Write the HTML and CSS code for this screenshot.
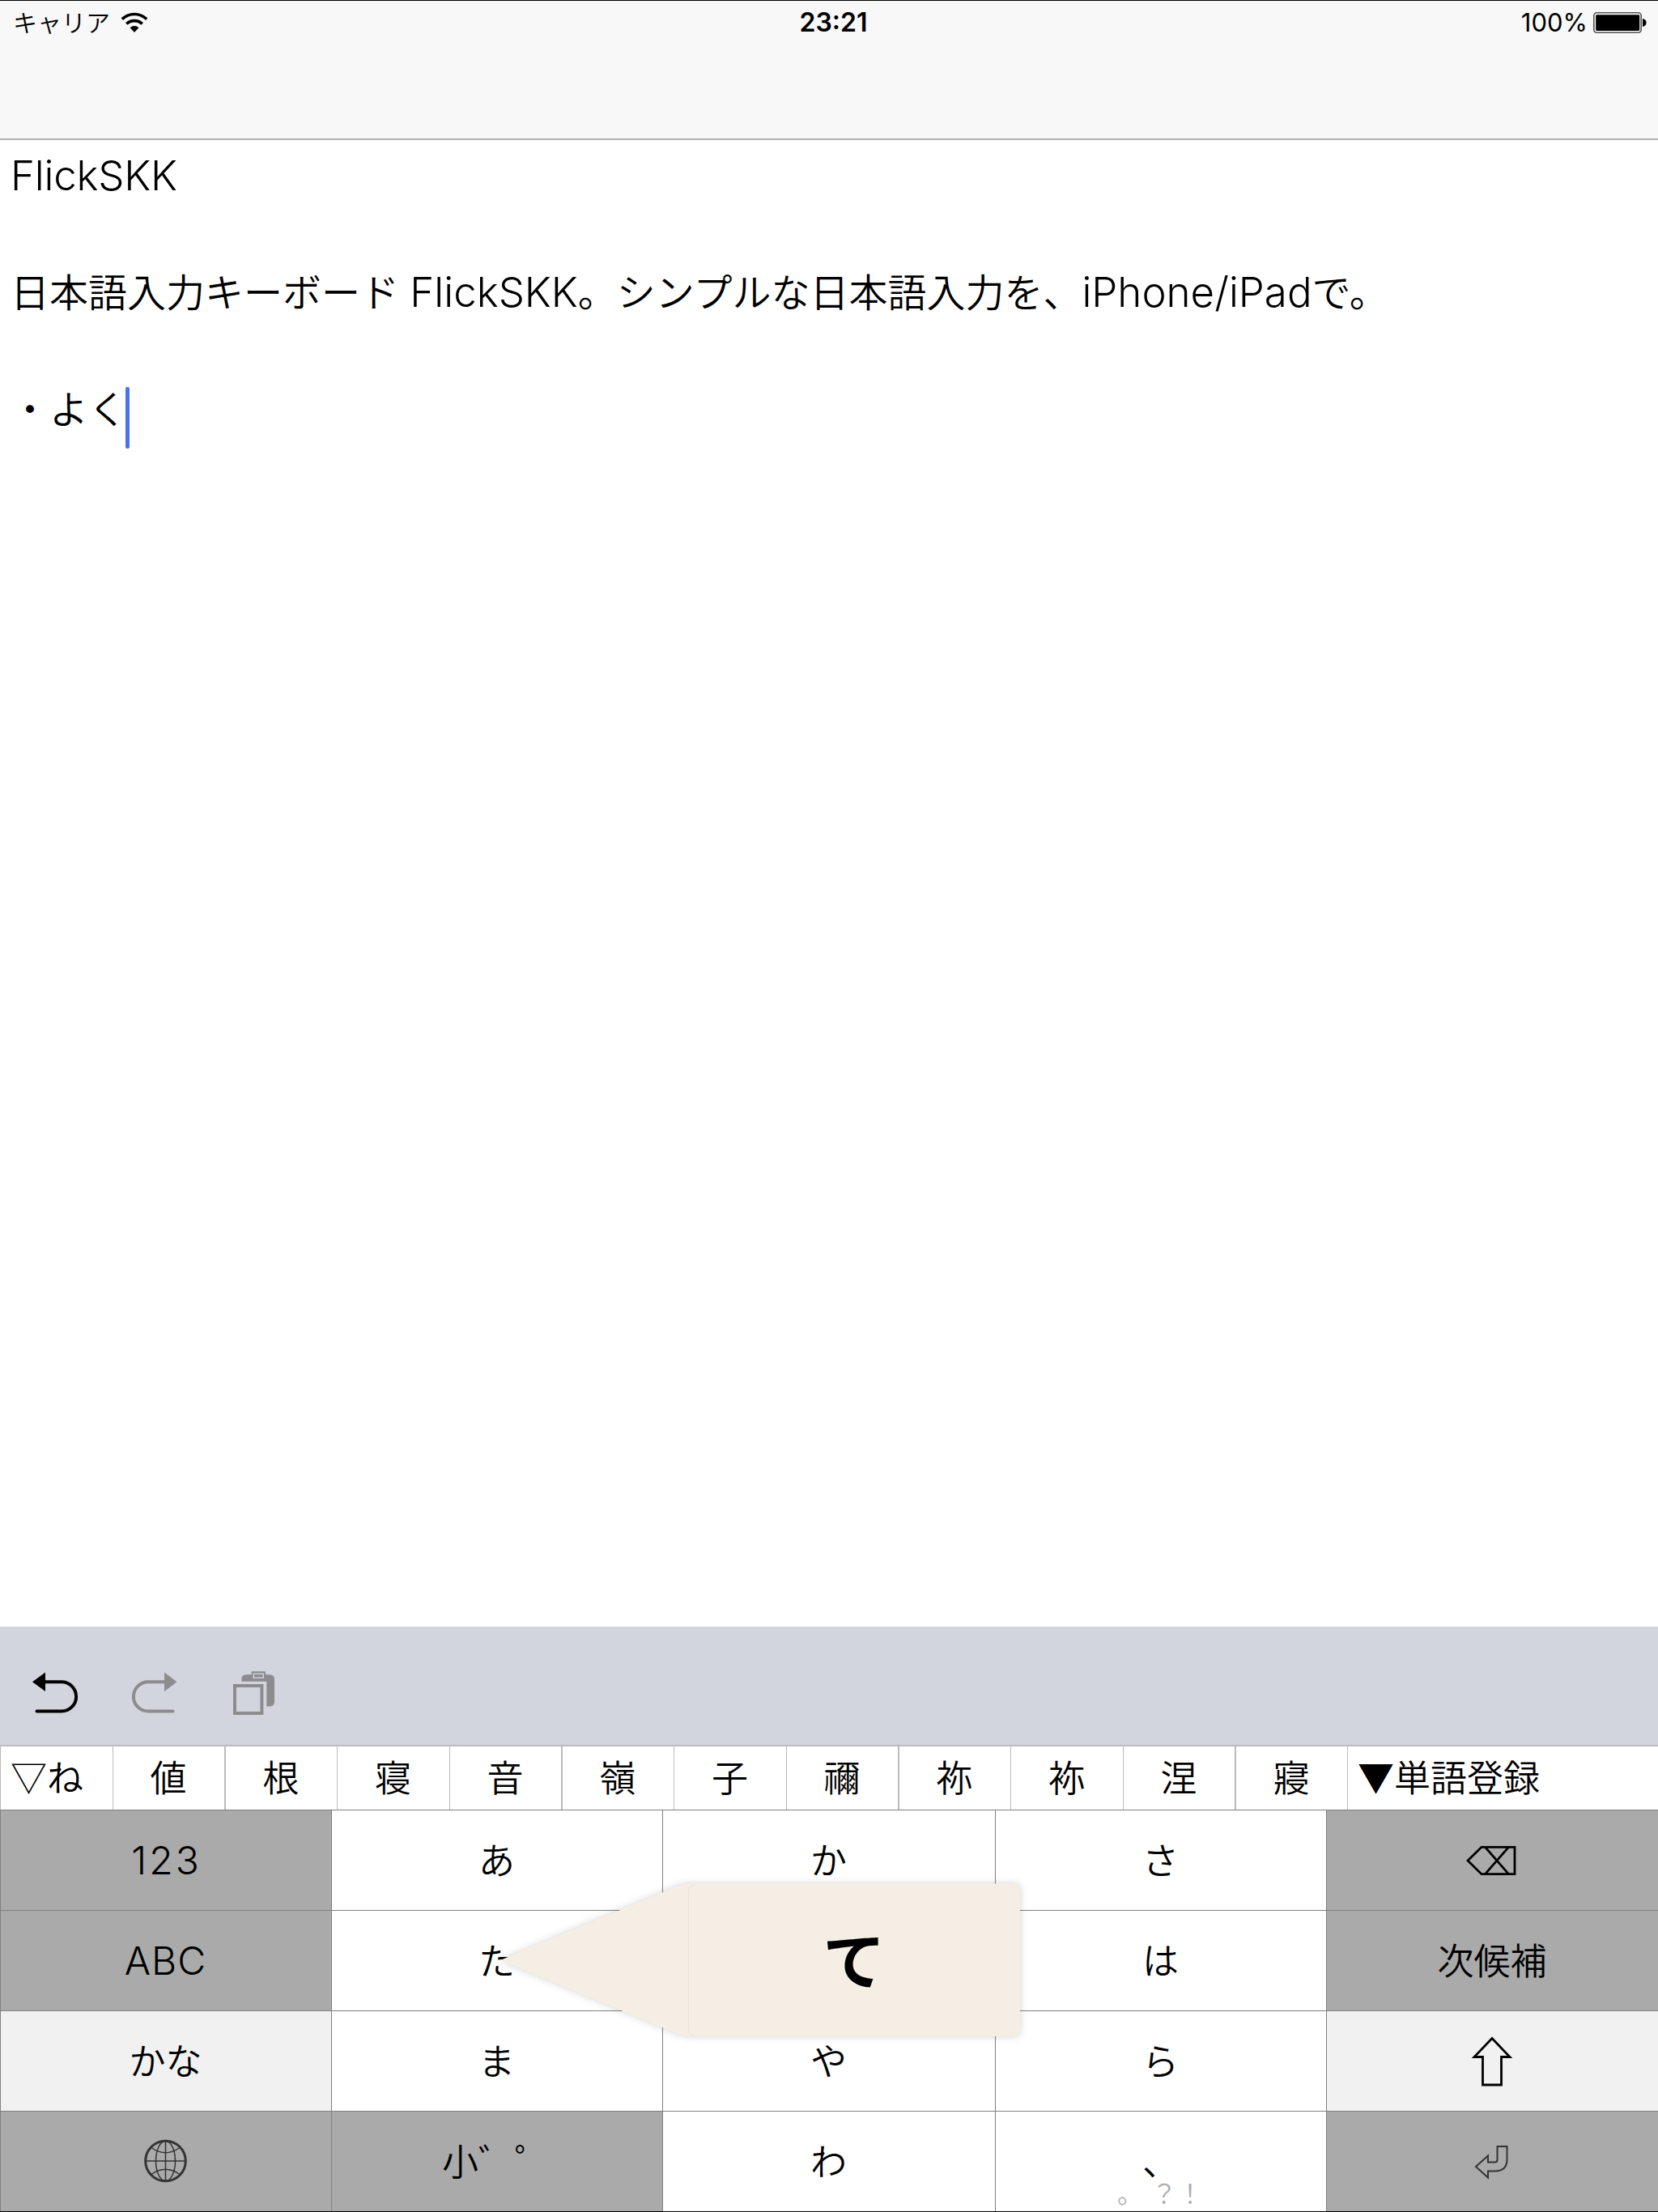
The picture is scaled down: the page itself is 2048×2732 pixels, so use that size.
FILE: index.html
```html
<!DOCTYPE html>
<html lang="ja">
<head>
<meta charset="utf-8">
<title>FlickSKK</title>
<link rel="stylesheet" href="styles.css">
</head>
<body>
<div class="screen">
  <header class="navbar">
    <div class="status">
      <div class="status-left">
        <span class="carrier">キャリア</span>
        <svg class="wifi" width="34" height="26" viewBox="0 0 34 26">
          <path d="M1.8 8.6A22 22 0 0 1 32.2 8.6" fill="none" stroke="#000" stroke-width="3.6"/>
          <path d="M7.2 14.4A14.5 14.5 0 0 1 26.8 14.4" fill="none" stroke="#000" stroke-width="3.6"/>
          <path d="M11.6 19.2A8 8 0 0 1 22.4 19.2L17 25Z"/>
        </svg>
      </div>
      <span class="clock">23:21</span>
      <div class="status-right">
        <span class="percent">100%</span>
        <svg class="battery" width="66" height="26" viewBox="0 0 66 26">
          <rect x=".8" y=".8" width="58.4" height="24.4" rx="3.5" fill="none" stroke="#555" stroke-width="1.6"/>
          <rect x="3.2" y="3.2" width="54" height="19.8" rx="1.2"/>
          <path d="M61 8q4.6 1 4.6 5t-4.6 5z"/>
        </svg>
      </div>
    </div>
  </header>

  <main class="editor">
    <p><span class="latin title">FlickSKK</span></p>
    <p>日本語入力キーボード<span class="latin name"> FlickSKK</span>。シンプルな日本語入力を、<span class="latin">iPhone/iPad</span>で。</p>
    <p class="typing">・よく<span class="caret"></span></p>
  </main>

  <section class="keyboard">
    <div class="toolbar">
      <svg width="58" height="52" viewBox="0 0 58 52">
        <path d="M16 13.3H37a18.1 18.1 0 0 1 0 36.200H6.500" fill="none" stroke="#000" stroke-width="4" stroke-linecap="round"/>
        <path d="M1 13.300L17 1.600V25Z"/>
      </svg>
      <svg width="58" height="52" viewBox="0 0 58 52">
        <path d="M41 13.300H20a18.100 18.100 0 0 0 0 36.200H50.500" fill="none" stroke="#8c8c90" stroke-width="4" stroke-linecap="round"/>
        <path d="M55.500 13.300L40 1.600V25Z" fill="#8c8c90"/>
      </svg>
      <svg class="clipboard" width="52" height="54" viewBox="0 0 52 54">
        <path d="M10.300 12.700V10.300q0-6 6-6H45q6 0 6 6V37.600q0 6-6 6H41.300V12.700Z" fill="#8c8c90"/>
        <rect x="22.700" y="0.300" width="17.300" height="9.400" fill="#8c8c90"/>
        <rect x="25.300" y="3.300" width="12" height="5" fill="#8c8c90" stroke="#d2d5dd" stroke-width="1.400"/>
        <rect x="2" y="18" width="33.400" height="34" fill="none" stroke="#8c8c90" stroke-width="4"/>
      </svg>
    </div>

    <div class="candidates">
      <div class="cand first">▽ね</div>
      <div class="cand wide">値</div>
      <div class="cand">根</div>
      <div class="cand">寝</div>
      <div class="cand wide">音</div>
      <div class="cand">嶺</div>
      <div class="cand">子</div>
      <div class="cand wide">禰</div>
      <div class="cand">祢</div>
      <div class="cand">袮</div>
      <div class="cand wide">涅</div>
      <div class="cand">寢</div>
      <div class="cand last">▼単語登録</div>
    </div>

    <div class="keys">
      <div class="key dark"><span class="latin num">123</span></div>
      <div class="key">あ</div>
      <div class="key">か</div>
      <div class="key">さ</div>
      <div class="key dark icon">
        <svg width="64" height="40" viewBox="0 0 64 40"><path d="M2 20L19 3.300H60V36.700H19ZM23.500 3.300L52.500 36.700M52.500 3.300L23.500 36.700" fill="none" stroke="#000" stroke-width="2.800"/></svg>
      </div>

      <div class="key dark"><span class="latin abc">ABC</span></div>
      <div class="key">た</div>
      <div class="key"></div>
      <div class="key">は</div>
      <div class="key dark">次候補</div>

      <div class="key light">かな</div>
      <div class="key">ま</div>
      <div class="key">や</div>
      <div class="key">ら</div>
      <div class="key light icon">
        <svg width="48" height="62" viewBox="0 0 48 62"><path d="M24 2.500L46 25.500H35.500V60H12.500V25.500H2Z" fill="none" stroke="#000" stroke-width="2.800"/></svg>
      </div>

      <div class="key dark icon">
        <svg width="54" height="54" viewBox="0 0 54 54" fill="none" stroke="#333" stroke-width="1.500">
          <circle cx="27.500" cy="26" r="24.800" stroke-width="3"/>
          <ellipse cx="27.500" cy="26" rx="12" ry="24.800"/>
          <path d="M27.500 1V51M2.500 26H52.500M10 9.500Q27.500 22 45 9.500M10 42.500Q27.500 30 45 42.500"/>
        </svg>
      </div>
      <div class="key dark">小゛゜</div>
      <div class="key">わ</div>
      <div class="key">、<div class="hint"><span>。</span><span>？</span><span>！</span></div></div>
      <div class="key dark icon">
        <svg width="42" height="42" viewBox="0 0 42 42"><path d="M1 27L16 13.500V21.500H24.500Q27.500 21.500 27.500 18.500V2H39.500V18Q39.500 32.500 24.500 32.500H16V40.500Z" fill="none" stroke="#333" stroke-width="2"/></svg>
      </div>

      <div class="popup">
        <svg width="660" height="220" viewBox="0 0 660 220">
          <path class="bubble" d="M8 110L226 19Q234 15.500 242 15.500H642Q650 15.500 650 23.500V196Q650 204 642 204H242Q234 204 226 200.500Z"/>
          <path d="M248 17Q240.500 18 240.500 25V195Q240.500 202 248 203" fill="none" stroke="#e9e1d6" stroke-width="1"/>
        </svg>
        <span class="popup-char">て</span>
      </div>
    </div>
  </section>
</div>
</body>
</html>
```
FILE: styles.css
```css
* { box-sizing: border-box; }

body {
  margin: 0;
  background: #fff;
  color: #000;
  font-family: "Noto Sans CJK JP", "Noto Sans", sans-serif;
  font-weight: 350;
}

.screen {
  display: flex;
  flex-direction: column;
  width: 2048px;
  height: 2732px;
  border-top: 1px solid #000;
  border-bottom: 1px solid #000;
}

svg { display: block; flex: none; overflow: visible; }

.navbar {
  height: 172px;
  background: #f8f8f8;
  border-bottom: 2px solid #b2b2b2;
}

.status {
  display: grid;
  grid-template-columns: 1fr auto 1fr;
  align-items: center;
  height: 54px;
  padding: 0 14px 0 17px;
  line-height: 54px;
}

.status-left, .status-right { display: flex; align-items: center; }
.status-left { gap: 13px; }
.status-right { justify-content: flex-end; gap: 7px; }

.carrier { font-size: 30px; line-height: 50px; padding-bottom: 4px; margin-left: -1px; }

.clock, .percent {
  font-family: Inter, "Liberation Sans", sans-serif;
  font-size: 32px;
}
.clock { padding-left: 8px; font-weight: 600; }
.percent { font-weight: 400; font-size: 31px; }

.latin {
  font-family: Inter, "Liberation Sans", sans-serif;
  font-weight: 350;
  font-size: 51px;
}

.editor {
  flex: 1;
  padding: 5px 13px 0;
  font-size: 48px;
  line-height: 72px;
}
.editor p { margin: 0 0 72px; height: 72px; white-space: pre; }
.editor .title { letter-spacing: -.2px; }
.editor .name { margin-left: -1px; }

.typing { display: flex; }
.caret {
  width: 5px;
  height: 76px;
  margin-top: 12px;
  margin-left: -2px;
  border-radius: 2px;
  background: #4a72ea;
}

.keyboard { height: 722px; background: #d2d5dd; }

.toolbar {
  display: flex;
  align-items: flex-start;
  gap: 66px;
  height: 146px;
  padding: 55px 39px 0;
}
.clipboard { margin-left: 1px; }

.candidates {
  display: grid;
  grid-template-columns: 139px 139px repeat(3, 138px 139px 139px) 138px 1fr;
  height: 80px;
  border-top: 2px solid #bbb;
  border-left: 1px solid #bbb;
  background: #fff;
  font-size: 45px;
  line-height: 74px;
}
.cand { padding-right: 1px; border-right: 1px solid #bbb; text-align: center; white-space: nowrap; }
.cand.wide { border-right-width: 2px; }
.cand.first { text-align: left; padding-left: 12px; }
.cand.last { border-right: 0; text-align: left; padding-left: 12px; }

.keys {
  position: relative;
  display: grid;
  grid-template-columns: 409px 409px 411px 409px 410px;
  grid-template-rows: repeat(4, 124px);
  font-size: 45px;
  border-right: 1px solid #808080;
}
.key {
  position: relative;
  display: flex;
  align-items: center;
  justify-content: center;
  padding: 0 1px 4px 0;
  background: #fff;
  border-top: 1px solid #808080;
  border-left: 1px solid #808080;
}
.key.icon { padding: 0 2px 0 0; }
.key.dark { background: #aaa; }
.key.light { background: #f1f1f1; }
.key .latin { font-size: 48px; padding-top: 4px; }
.key .num { letter-spacing: 3px; padding-left: 2px; }
.key .abc { letter-spacing: 1px; }

.hint {
  position: absolute;
  left: 150px;
  bottom: -3px;
  display: flex;
  font-size: 32px;
  line-height: 54px;
  color: #b0b0b0;
}
.hint span:first-child { margin-right: 10px; }

.popup {
  position: absolute;
  left: 610px;
  top: 76px;
  width: 650px;
  height: 220px;
}
.bubble { fill: #f5eee4; filter: drop-shadow(0 0 5px rgba(0, 0, 0, .18)); }
.popup-char {
  position: absolute;
  left: 240px;
  top: 0;
  width: 410px;
  line-height: 214px;
  text-align: center;
  font-size: 77px;
  font-weight: 700;
}
```
